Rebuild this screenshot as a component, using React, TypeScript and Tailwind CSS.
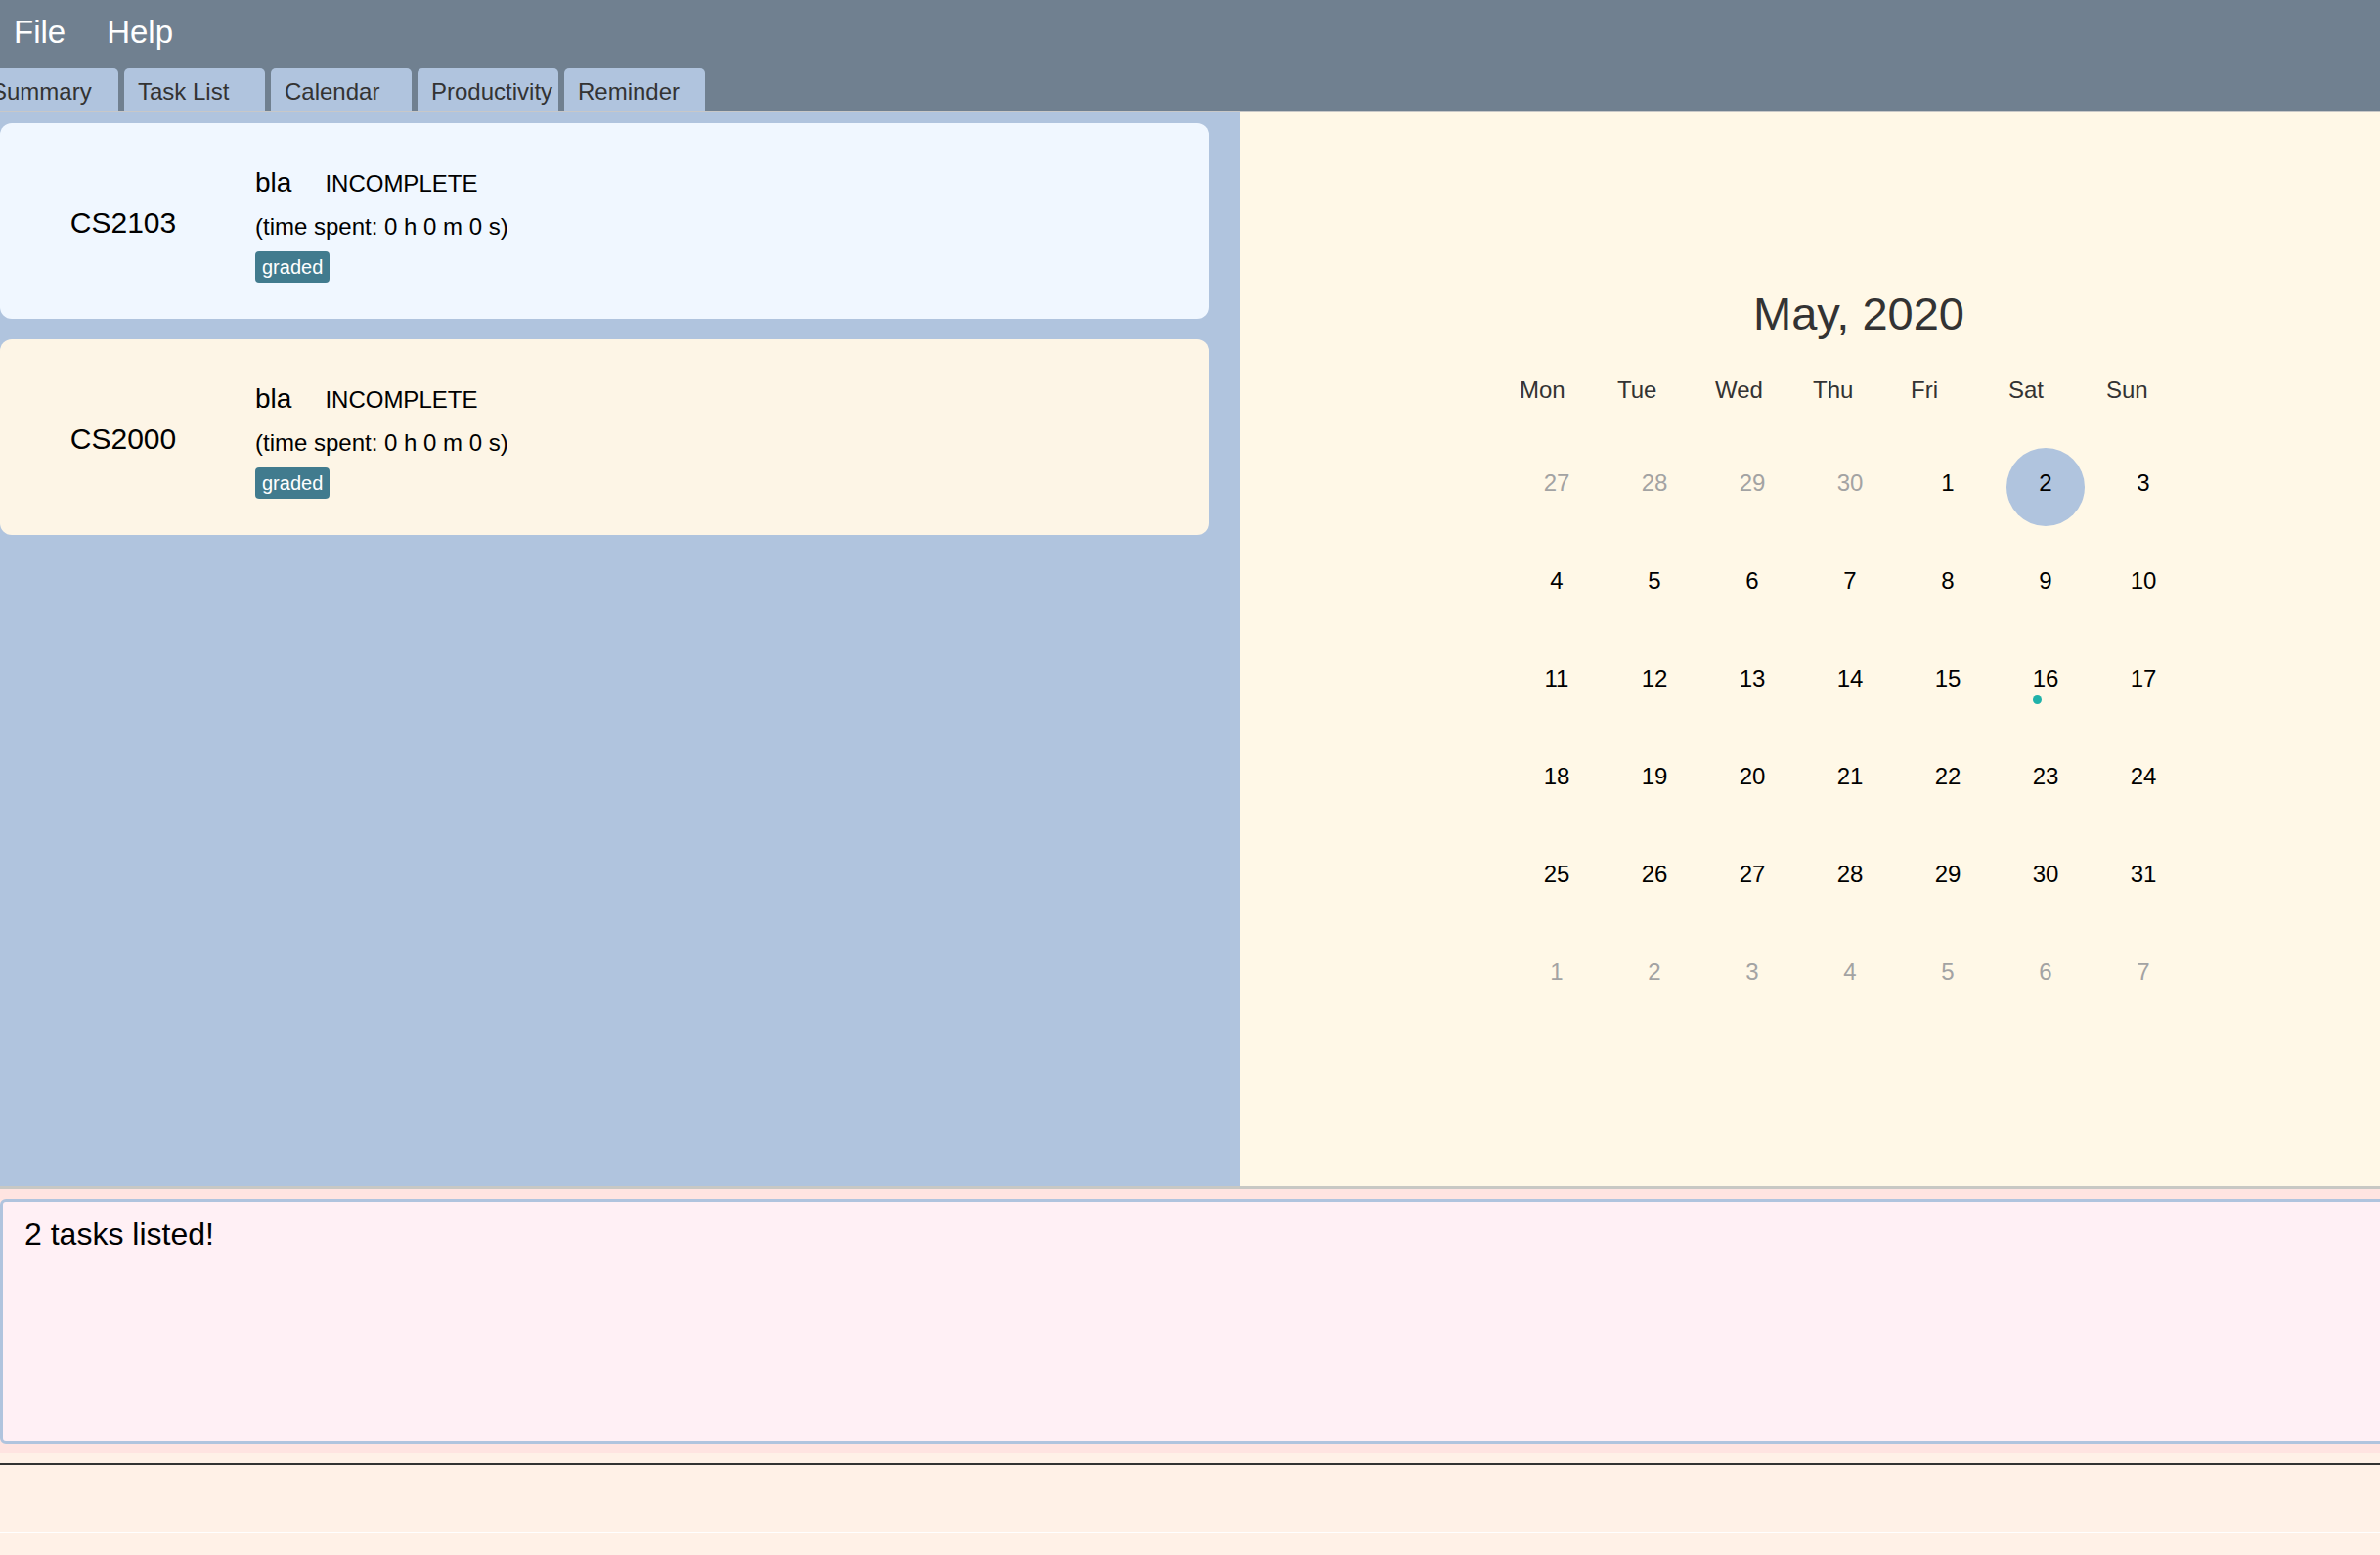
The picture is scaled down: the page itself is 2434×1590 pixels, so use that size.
import React from "react";

const tasks = [
  { module: "CS2103", name: "bla", status: "INCOMPLETE", bg: "bg-[#f0f7ff]" },
  { module: "CS2000", name: "bla", status: "INCOMPLETE", bg: "bg-[#fdf5e6]" },
];

const tabs = ["Summary", "Task List", "Calendar", "Productivity", "Reminder"];
const days = ["Mon", "Tue", "Wed", "Thu", "Fri", "Sat", "Sun"];

// May 2020, weeks starting Monday
const weeks: { d: number; other: boolean }[][] = [
  [27, 28, 29, 30].map((d) => ({ d, other: true })).concat([1, 2, 3].map((d) => ({ d, other: false }))),
  [4, 5, 6, 7, 8, 9, 10].map((d) => ({ d, other: false })),
  [11, 12, 13, 14, 15, 16, 17].map((d) => ({ d, other: false })),
  [18, 19, 20, 21, 22, 23, 24].map((d) => ({ d, other: false })),
  [25, 26, 27, 28, 29, 30, 31].map((d) => ({ d, other: false })),
  [1, 2, 3, 4, 5, 6, 7].map((d) => ({ d, other: true })),
];

function TaskCard({ task }: { task: (typeof tasks)[number] }) {
  return (
    <div className={`flex h-[200px] shrink-0 rounded-[12px] ${task.bg}`}>
      <div className="flex w-[252px] items-center justify-center pt-[3px] text-[30px] leading-none text-black">
        {task.module}
      </div>
      <div className="flex flex-col pt-[45px] pl-[9px]">
        <div className="flex h-[32px] items-baseline leading-[32px]">
          <span className="text-[28px] text-black">{task.name}</span>
          <span className="ml-[34px] text-[24px] text-black">{task.status}</span>
        </div>
        <div className="mt-[13px] h-[32px] text-[24px] leading-[32px] text-black">
          (time spent: 0 h 0 m 0 s)
        </div>
        <div className="mt-[9px] flex">
          <span className="flex h-[32px] items-center rounded-[4px] bg-[#417b8e] px-[7px] text-[20px] leading-none text-white">
            graded
          </span>
        </div>
      </div>
    </div>
  );
}

function Calendar() {
  return (
    <div className="flex h-full flex-col bg-[#fff8e7] pt-[175px] pl-[274px]">
      <div className="w-[700px]">
        <div className="flex h-[60px] items-center justify-center pl-[18px] text-[47px] leading-none text-[#333333]">
          May, 2020
        </div>
        <div className="mt-[24px] grid h-[50px] grid-cols-7">
          {days.map((d) => (
            <div key={d} className="flex items-center pl-[12px] text-[24px] leading-none text-[#333333]">
              {d}
            </div>
          ))}
        </div>
        <div className="mt-[20px] flex flex-col">
          {weeks.map((week, wi) => (
            <div key={wi} className="grid h-[100px] grid-cols-7">
              {week.map((c, ci) => {
                const today = wi === 0 && c.d === 2 && !c.other;
                const dotted = wi === 2 && c.d === 16;
                return (
                  <div key={ci} className="relative flex items-center justify-center">
                    {today && <div className="absolute top-[14px] left-[10px] h-[80px] w-[80px] rounded-full bg-[#b0c4de]" />}
                    <span
                      className={`relative text-[24px] leading-none ${c.other ? "text-[#a3a3a3]" : "text-black"}`}
                    >
                      {c.d}
                    </span>
                    {dotted && <div className="absolute top-[67px] left-[37px] h-[9px] w-[9px] rounded-full bg-[#20b2aa]" />}
                  </div>
                );
              })}
            </div>
          ))}
        </div>
      </div>
    </div>
  );
}

export default function App() {
  return (
    <div
      className="flex h-[1590px] w-full flex-col overflow-hidden"
      style={{ fontFamily: '"Liberation Sans", Arial, sans-serif' }}
    >
      {/* menu + tab header */}
      <div className="shrink-0 bg-[#708090]">
        <div className="flex h-[64px] items-center pl-[14px] text-[33px] leading-none text-white">
          <span>File</span>
          <span className="ml-[42px]">Help</span>
        </div>
        <div className="mt-[6px] -ml-[23px] flex h-[43px] gap-[6px]">
          {tabs.map((t) => (
            <div
              key={t}
              className="flex w-[144px] shrink-0 items-center rounded-t-[5px] bg-[#b0c4de] pt-[5px] pl-[14px] text-[24px] leading-none whitespace-nowrap text-[#333333]"
            >
              {t}
            </div>
          ))}
        </div>
      </div>
      <div className="h-[2px] shrink-0 bg-[#c8c8c8]" />

      {/* main split */}
      <div className="flex h-[1098px] shrink-0">
        <div className="flex w-[1268px] shrink-0 flex-col gap-[21px] bg-[#b0c4de] pt-[11px] pr-[32px]">
          {tasks.map((t) => (
            <TaskCard key={t.module} task={t} />
          ))}
        </div>
        <div className="flex-1">
          <Calendar />
        </div>
      </div>

      {/* result display */}
      <div className="h-[3px] shrink-0 bg-[#c8c8c4]" />
      <div className="shrink-0 bg-[#ffe4e1] py-[10px]">
        <div className="-mr-[10px] h-[250px] rounded-[6px] border-[3px] border-[#b0c4de] bg-[#fff0f5] pt-[17px] pl-[22px] text-[32px] leading-none text-black">
          2 tasks listed!
        </div>
      </div>

      {/* command box */}
      <div className="h-[104px] shrink-0 bg-[#fff1e7] pt-[10px]">
        <div className="h-[2px] bg-[#333333]" />
        <div className="h-[68px]" />
        <div className="h-[2px] bg-white" />
      </div>
    </div>
  );
}
